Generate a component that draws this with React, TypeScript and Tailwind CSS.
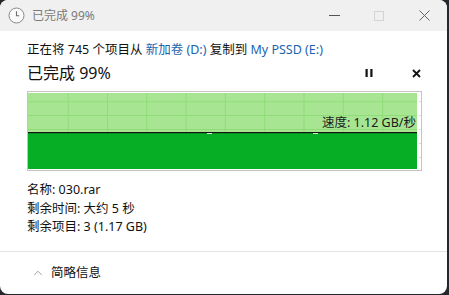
import { ChevronUp } from 'lucide-react'

const font = "font-['Noto_Sans','Noto_Sans_CJK_SC',sans-serif]"

function ClockIcon() {
  return (
    <svg width="17" height="17" viewBox="0 0 17 17" className="shrink-0">
      <circle cx="8.5" cy="8.5" r="7.5" fill="#fafafa" stroke="#8a8a8a" strokeWidth="1" />
      <path d="M8.5 4.2 V8.8 H11.2" fill="none" stroke="#6e6e6e" strokeWidth="1.1" />
    </svg>
  )
}

// progress chart: light green history area over a solid green bar
function SpeedChart() {
  const cols = [39.7, 79, 118.3, 157.6, 196.9, 236.2, 275.5, 314.8, 354.1]
  const rows = [8.3, 22, 36]
  return (
    <div className="relative mt-[7px] h-[80px] w-[395px] border border-[#c4c4c4] bg-white pt-px pr-[3px] pb-px">
      <svg width="389" height="76" viewBox="0 0 389 76" className="block">
        <rect x="0" y="0" width="389" height="39" fill="#a7e592" />
        {cols.map((x) => (
          <rect key={x} x={x} y="0" width="1" height="39" fill="#8fdc78" />
        ))}
        {rows.map((y) => (
          <rect key={y} x="0" y={y} width="389" height="1" fill="#8fdc78" />
        ))}
        <rect x="0" y="39" width="389" height="37" fill="#06ae25" />
        <rect x="0" y="39" width="389" height="1.2" fill="#111" />
        <rect x="179" y="40" width="5" height="1" fill="#e8e8e8" />
        <rect x="285" y="40" width="5" height="1" fill="#e8e8e8" />
      </svg>
      <svg width="3" height="76" className="absolute right-0 top-px">
        <rect x="1" y="8" width="2" height="1" fill="#dcdcdc" />
        <rect x="1" y="22" width="2" height="1" fill="#dcdcdc" />
        <rect x="1" y="36" width="2" height="1" fill="#dcdcdc" />
        <rect x="1" y="50" width="2" height="1" fill="#dcdcdc" />
        <rect x="1" y="64" width="2" height="1" fill="#dcdcdc" />
      </svg>
      <span className="absolute right-[5px] top-[22px] text-[12.5px] leading-[17px] text-[#1b1b1b]">
        速度: 1.12 GB/秒
      </span>
    </div>
  )
}

export default function App() {
  return (
    <div className={`h-[295px] w-[449px] overflow-hidden bg-[#26262c] ${font}`}>
      <div className="flex h-[294px] w-[447px] flex-col overflow-hidden rounded-[8px] bg-white">
        {/* Title bar */}
        <div className="flex h-[31px] shrink-0 items-center bg-[#f0f0f0] pl-[8px]">
          <ClockIcon />
          <span className="ml-[7px] text-[12px] leading-none text-[#7a7a7a]">已完成 99%</span>
          <div className="ml-auto flex h-full items-center">
            <div className="flex h-full w-[46px] items-center justify-center">
              <div className="h-px w-[11px] bg-[#555]" />
            </div>
            <div className="flex h-full w-[44px] items-center justify-center">
              <div className="h-[10px] w-[10px] border border-[#d4d4d4]" />
            </div>
            <div className="flex h-full w-[46px] items-center justify-center">
              <svg width="11" height="11" viewBox="0 0 11 11">
                <path d="M0.5 0.5 L10.5 10.5 M10.5 0.5 L0.5 10.5" stroke="#666" strokeWidth="1" />
              </svg>
            </div>
          </div>
        </div>

        {/* Body */}
        <div className="flex flex-1 flex-col pl-[27px] pt-[10px]">
          <div className="text-[12.5px] leading-[18px] text-[#111]">
            正在将 745 个项目从 <span className="text-[#1a64b0]">新加卷 (D:)</span> 复制到{' '}
            <span className="text-[#1a64b0]">My PSSD (E:)</span>
          </div>
          <div className="mt-[3px] flex h-[22px] items-center pr-[26px]">
            <span className="text-[16px] leading-[22px] text-[#111]">已完成 99%</span>
            <svg width="8" height="8" viewBox="0 0 8 8" className="ml-auto mr-[39px]">
              <rect x="0.5" y="0" width="2.2" height="8" fill="#111" />
              <rect x="5.3" y="0" width="2.2" height="8" fill="#111" />
            </svg>
            <svg width="9" height="9" viewBox="0 0 9 9">
              <path d="M1 1 L8 8 M8 1 L1 8" stroke="#111" strokeWidth="1.8" />
            </svg>
          </div>
          <SpeedChart />
          <div className="mt-[10px] flex flex-col text-[12.5px] leading-[18.5px] text-[#111]">
            <span>名称: 030.rar</span>
            <span>剩余时间: 大约 5 秒</span>
            <span>剩余项目: 3 (1.17 GB)</span>
          </div>
        </div>

        {/* Footer */}
        <div className="flex h-[43px] shrink-0 items-center border-t border-[#e3e3e3] pl-[31px]">
          <ChevronUp className="h-[14px] w-[14px] text-[#8a8a8a]" strokeWidth={1.4} />
          <span className="ml-[6px] text-[12.5px] leading-none text-[#111]">简略信息</span>
        </div>
      </div>
    </div>
  )
}
